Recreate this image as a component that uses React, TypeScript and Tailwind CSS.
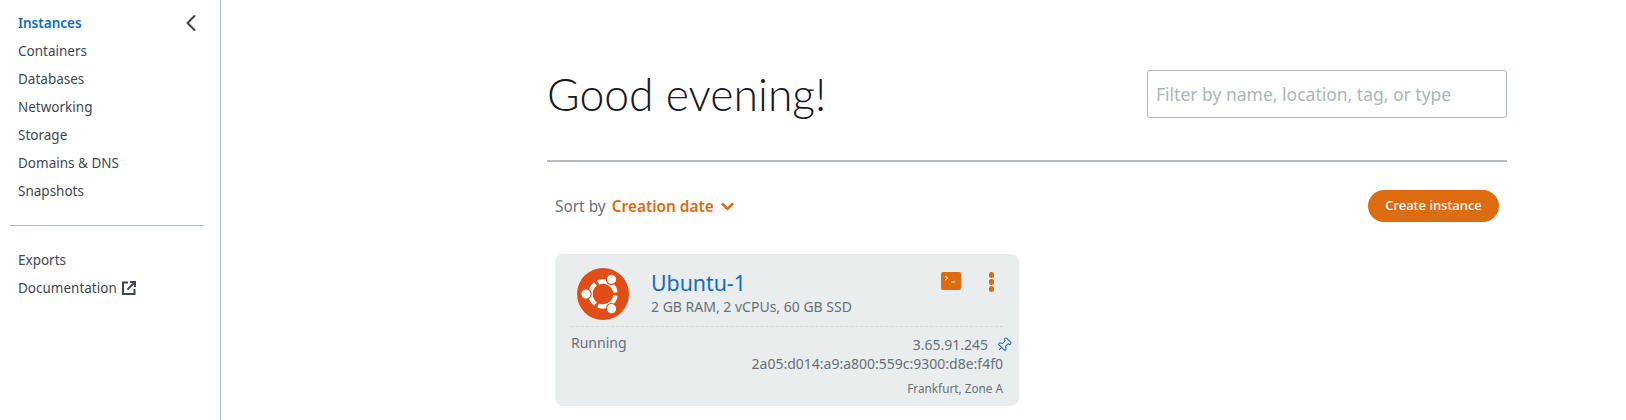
import { ChevronLeft, ChevronDown, Pin } from "lucide-react";

const navTop = ["Containers", "Databases", "Networking", "Storage", "Domains & DNS", "Snapshots"];

function UbuntuLogo() {
  return (
    <svg width="52" height="52" viewBox="0 0 52 52" className="shrink-0">
      <circle cx="26" cy="26" r="26" fill="#e14d16" />
      <g fill="none" stroke="#fff" strokeWidth="4.5">
        <path d="M38.4 27.5 A12.5 12.5 0 0 1 21.1 37.5" />
        <path d="M18.5 36 A12.5 12.5 0 0 1 18.5 16" />
        <path d="M21.1 14.5 A12.5 12.5 0 0 1 38.4 24.5" />
      </g>
      <circle cx="9" cy="26" r="5.2" fill="#fff" stroke="#e14d16" strokeWidth="1.2" />
      <circle cx="34.5" cy="11.3" r="5.2" fill="#fff" stroke="#e14d16" strokeWidth="1.2" />
      <circle cx="34.5" cy="40.7" r="5.2" fill="#fff" stroke="#e14d16" strokeWidth="1.2" />
    </svg>
  );
}

function ExternalIcon() {
  return (
    <svg width="14" height="14" viewBox="0 0 14 14" fill="none" stroke="#414750" strokeWidth="2">
      <path d="M6 1.5H1v11.5h11.5V8" />
      <path d="M5.5 8.5L12.5 1.5M8 1h5v5" />
    </svg>
  );
}

function TerminalIcon() {
  return (
    <div className="flex h-[18px] w-5 items-start rounded-[2px] bg-[#dd6b10] pl-[3px] pt-[3px]">
      <svg width="14" height="10" viewBox="0 0 14 10" fill="none" stroke="#fff" strokeWidth="1">
        <path d="M1 1l3 2-3 2M7 7h4" />
      </svg>
    </div>
  );
}

export default function App() {
  return (
    <div className="flex h-[420px] overflow-hidden bg-white font-['Noto_Sans',sans-serif] text-[#414750]">
      <aside className="w-[221px] shrink-0 border-r border-[#b4bdca] px-[10px] pt-[9px]">
        <div className="flex h-7 items-center justify-between pl-2 pr-[5px]">
          <a className="text-[13.5px] font-semibold text-[#0f6bc9]">Instances</a>
          <ChevronLeft size={28} strokeWidth={1.8} className="-my-1 text-[#3f4650]" />
        </div>
        {navTop.map((n) => (
          <div key={n} className="flex h-7 items-center pl-2 text-[13.5px]">
            {n}
          </div>
        ))}
        <div className="mt-5 mb-5 w-[194px] border-t border-[#b4bdca]" />
        <div className="flex h-7 items-center pl-2 text-[13.5px]">Exports</div>
        <div className="flex h-7 items-center gap-[5px] pl-2 text-[13.5px]">
          Documentation <ExternalIcon />
        </div>
      </aside>

      <main className="ml-[326px] w-[960px] shrink-0">
        <div className="flex items-start justify-between pt-[70px]">
          <h1 className="font-['Lato',sans-serif] text-[44.5px] leading-[48px] font-light text-[#16191f]">Good evening!</h1>
          <input
            placeholder="Filter by name, location, tag, or type"
            className="h-12 w-[360px] rounded-[3px] border border-[#aab7b8] px-2 text-[17.5px] placeholder:text-[#aab7b8]"
          />
        </div>
        <div className="mt-[42px] h-[2px] bg-[#b4bdca]" />

        <div className="mt-7 flex h-8 items-center justify-between pl-2 pr-2">
          <div className="flex translate-y-px items-center text-[15.4px] text-[#687078]">
            Sort by <span className="ml-[6px] font-semibold text-[#dd6b10]">Creation date</span>
            <ChevronDown size={19} strokeWidth={3.5} className="ml-1 text-[#dd6b10]" />
          </div>
          <button className="h-8 w-[131px] rounded-2xl bg-[#dd6b10] text-[13px] font-medium text-white">Create instance</button>
        </div>

        <section className="mt-8 ml-2 h-[152px] w-[464px] rounded-lg bg-[#e9eded] px-4 pt-[14px]">
          <div className="flex h-[59px] items-start border-b border-dashed border-[#d5dbdb]">
            <div className="ml-[6px]">
              <UbuntuLogo />
            </div>
            <div className="ml-[22px] flex-1">
              <div className="text-[21.3px] leading-[30px] text-[#0f6bc9]">Ubuntu-1</div>
              <div className="text-[14px] leading-[18px] text-[#687078]">2 GB RAM, 2 vCPUs, 60 GB SSD</div>
            </div>
            <div className="mt-1 flex items-start gap-7">
              <TerminalIcon />
              <div className="mr-[9px] flex flex-col gap-[1.5px]">
                <span className="size-[5.5px] rounded-full bg-[#dd6b10]" />
                <span className="size-[5.5px] rounded-full bg-[#dd6b10]" />
                <span className="size-[5.5px] rounded-full bg-[#dd6b10]" />
              </div>
            </div>
          </div>
          <div className="mt-[5px] flex items-start justify-between text-[14px] text-[#687078]">
            <div className="leading-[22px]">Running</div>
            <div className="text-right">
              <div className="relative pr-[15px] pt-[2px] leading-[22px]">
                3.65.91.245
                <Pin size={16} strokeWidth={1.5} className="absolute -right-[9px] top-[5px] rotate-45 text-[#0f6bc9]" />
              </div>
              <div className="-mt-[2px] leading-[20px]">2a05:d014:a9:a800:559c:9300:d8e:f4f0</div>
              <div className="mt-[5px] text-[11.75px] leading-[18px]">Frankfurt, Zone A</div>
            </div>
          </div>
        </section>
      </main>
    </div>
  );
}
